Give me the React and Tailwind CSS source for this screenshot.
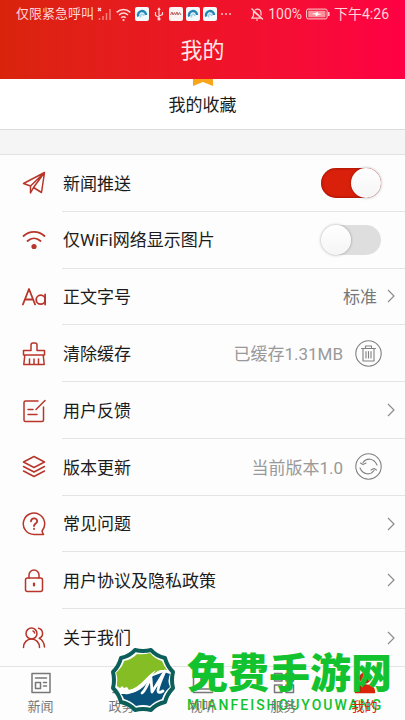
import React from "react";

const sans = "font-['Roboto','Noto_Sans_CJK_SC',sans-serif]";

function Glyph({ children, className = "size-6" }) {
  return (
    <svg
      viewBox="0 0 24 24"
      fill="none"
      stroke="currentColor"
      strokeWidth="1.5"
      strokeLinecap="round"
      strokeLinejoin="round"
      aria-hidden="true"
      className={`shrink-0 ${className}`}
    >
      {children}
    </svg>
  );
}

const icons = {
  plane: (
    <Glyph>
      <path d="M22.500 1.500 1.500 12.500 8.500 15 22.500 1.500 19.500 21.500 11.500 16.500 22.500 1.500M8.500 15v7l3-5.500" />
    </Glyph>
  ),
  wifi: (
    <Glyph>
      <path strokeWidth="1.800" d="M1.500 8c6-5.600 15-5.600 21 0M5.500 13c4-3.600 9-3.600 13 0" />
      <circle cx="12" cy="18.500" r="2.600" fill="currentColor" stroke="none" />
    </Glyph>
  ),
  font: (
    <Glyph>
      <path strokeWidth="1.800" d="M.9 19.500 7 4l6.100 15.500M3.200 14.500h7.600M23.100 9.500v10" />
      <circle cx="18.700" cy="14.700" r="4.500" strokeWidth="1.800" />
    </Glyph>
  ),
  brush: (
    <Glyph>
      <path d="M1.500 8.500h7.500V3a2 2 0 0 1 2-2h2a2 2 0 0 1 2 2v5.500h7.500V13h-21zM2.800 13l-1 9.500h20.400l-1-9.500M7.500 17v5.500M12 17v5.500M16.500 17v5.500" />
    </Glyph>
  ),
  edit: (
    <Glyph>
      <path d="M16 2H3.500A1.500 1.500 0 0 0 2 3.500v17.500a1.500 1.500 0 0 0 1.500 1.500h16.500a1.500 1.500 0 0 0 1.500-1.500V8M23 1.500l-9 9M6 10.500h5M6 15.500h9" />
    </Glyph>
  ),
  layers: (
    <Glyph>
      <path d="M12 1.500 1.500 7 12 12.500 22.500 7zM1.500 11.500 12 17l10.500-5.500M1.500 16 12 21.500 22.500 16" />
    </Glyph>
  ),
  help: (
    <Glyph>
      <path d="M21.500 22.500H12a10.700 10.700 0 1 1 8-3.600c.2 1.300.7 2.400 1.500 3.600z" />
      <path strokeWidth="1.800" d="M9 9.300c.2-4 6.300-3.800 6.200 0 0 2.200-3.200 2.200-3.200 4.700M12 16.700v.3" />
    </Glyph>
  ),
  lock: (
    <Glyph>
      <rect x="3.500" y="9" width="17" height="13.500" rx="2" />
      <path d="M7 9V6a5 5 0 0 1 10 0v3" />
      <path strokeWidth="2.200" d="M12 14.500v2" />
    </Glyph>
  ),
  people: (
    <Glyph>
      <circle cx="9.500" cy="7.500" r="5.500" />
      <path d="M1.500 21.500c0-5 3.500-8.500 8-8.500s8 3.500 8 8.500M11 5c1 .3 1.500 1 1.600 2M16.500 2.300c5 1.200 5.500 8 .8 10 3 1.500 5 4.700 5.200 8.700" />
    </Glyph>
  ),
};

function Chevron() {
  return (
    <svg viewBox="0 0 8 14" fill="none" stroke="#8c8c8c" strokeWidth="1.200" aria-hidden="true" className="h-[14px] w-2 shrink-0">
      <path d="m1 1 6 6-6 6" />
    </svg>
  );
}

function Row({ icon, id, label, detail, muted, children }) {
  const Tag = id ? "label" : "span";
  return (
    <li className="group flex flex-1 pl-[22px]">
      <span className="flex w-10 shrink-0 items-center text-[#b8352a]">{icons[icon]}</span>
      <div className="flex flex-1 items-center border-b border-[#e4e4e4] pl-px group-last:border-b-0">
        <Tag htmlFor={id} className="flex-1 pt-[3px] text-[17px] text-[#1b1b1b]">{label}</Tag>
        {detail && (
          <span className={muted ? "mr-3 pt-[3px] text-[17px] text-[#999]" : "mr-[10px] pt-[3px] text-[17px] text-[#777]"}>{detail}</span>
        )}
        {children}
      </div>
    </li>
  );
}

function LinkEnd({ label }) {
  return (
    <button type="button" aria-label={label} className="flex h-10 items-center pr-[10px]">
      <Chevron />
    </button>
  );
}

function Switch({ id, on }) {
  return (
    <input
      id={id}
      type="checkbox"
      role="switch"
      defaultChecked={on}
      className="mr-6 flex h-[30px] w-[60px] shrink-0 appearance-none rounded-full bg-[#dedede] before:size-[30px] before:rounded-full before:bg-gradient-to-b before:from-white before:to-[#f5f5f5] before:shadow-[0_0_3px_rgba(0,0,0,0.35)] checked:justify-end checked:bg-[#d9200a] checked:shadow-[inset_0_0_3px_rgba(90,0,0,0.7)]"
    />
  );
}

function RoundButton({ label, children }) {
  return (
    <button type="button" aria-label={label} className="mr-[23px] text-[#808080]">
      <svg viewBox="0 0 27 27" fill="none" stroke="currentColor" strokeWidth="1.100" strokeLinecap="round" strokeLinejoin="round" className="size-[27px]">
        <circle cx="13.500" cy="13.500" r="12.700" />
        {children}
      </svg>
    </button>
  );
}

function BrowserBadge() {
  return (
    <svg viewBox="0 0 14 14" className="size-[14px]" aria-hidden="true">
      <rect width="14" height="14" rx="2" fill="#f4f9fc" />
      <path d="M3.300 9.500A4 4 0 1 1 11 8" fill="none" stroke="#2387b5" strokeWidth="2.400" />
      <path d="M5.500 10.500C5 7 8 6 9 9" fill="none" stroke="#9fd4ec" strokeWidth="1.500" />
    </svg>
  );
}

function StatusBar() {
  return (
    <div className="flex h-7 items-center justify-between pr-4 pl-4 text-[13px] text-[#ffd5d5]">
      <div className="flex items-center gap-[3px]">
        <span>仅限紧急呼叫</span>
        <svg viewBox="0 0 15 14" fill="none" className="h-[14px] w-[15px]" aria-hidden="true">
          <path d="m1 1 3 3M4 1 1 4" stroke="#ffe0e0" strokeWidth="1.300" />
          <path d="M2.500 13v-2M6 13V9M9.500 13V6M13 13V2" stroke="#f5807c" strokeWidth="1.500" />
        </svg>
        <svg viewBox="0 0 14 14" fill="none" stroke="currentColor" strokeWidth="1.400" className="mx-px size-[15px]" aria-hidden="true">
          <path d="M.6 5c3.700-3.500 9.100-3.500 12.800 0M2.800 7.500c2.600-2.300 5.800-2.300 8.400 0M4.900 10c1.300-1.200 2.900-1.200 4.200 0" />
          <circle cx="7" cy="12.200" r="1" fill="currentColor" stroke="none" />
        </svg>
        <BrowserBadge />
        <svg viewBox="0 0 14 14" fill="none" stroke="currentColor" strokeWidth="1.200" className="size-[14px]" aria-hidden="true">
          <path d="M7 1.500v11M7 10.500 3.500 8.500V5M7 9l3.500-1.500V5M5.800 2.800 7 1.200l1.200 1.600" />
          <circle cx="7" cy="12" r="1" fill="currentColor" />
        </svg>
        <svg viewBox="0 0 14 14" className="size-[14px]" aria-hidden="true">
          <rect width="14" height="14" rx="2" fill="#fdf3f2" />
          <path d="m1.500 8 1.500-3 1 3 1.500-2.500 1 2.500 1.500-3 1 3 1.500-2.500L12 8" stroke="#b9615f" strokeWidth="1" fill="none" />
        </svg>
        <BrowserBadge />
        <BrowserBadge />
        <svg viewBox="0 0 12 14" fill="currentColor" className="h-[14px] w-3" aria-hidden="true">
          <circle cx="2" cy="7" r=".9" />
          <circle cx="6" cy="7" r=".9" />
          <circle cx="10" cy="7" r=".9" />
        </svg>
      </div>
      <div className="flex items-center gap-1">
        <svg viewBox="0 0 14 14" fill="none" stroke="currentColor" strokeWidth="1.200" className="size-[14px]" aria-hidden="true">
          <path d="M2 11.200h9.500L3.500 4.500v4zM5 3c2.500-2 6-.5 6 2.500v3M1.500 1.500l11.500 11M6 13h2" />
        </svg>
        <span className="text-[14px]">100%</span>
        <svg viewBox="0 0 24 12" fill="none" className="h-3 w-6" aria-hidden="true">
          <rect x=".6" y="1.100" width="20.500" height="9.800" rx="1.500" stroke="#ffd5d5" />
          <rect x="2.200" y="2.700" width="17.300" height="6.600" fill="#f9929b" />
          <path d="M22.800 4v4" stroke="#ffd5d5" strokeWidth="1.500" />
          <path d="m5.500 6 4-1 2-1.500 .5 2 4 .5-4 1-2 1.500-.5-2z" fill="#fff" />
        </svg>
        <span className="text-[14px]">下午4:26</span>
      </div>
    </div>
  );
}

const tabs = [
  { name: "新闻", art: <path d="M3 2.500h18v19H3zM6.500 7h11M6.500 11.500h5v6h-5zM14.500 11.500h3M14.500 15h3" /> },
  { name: "政务", art: <path d="M3 21.500h18M5 21.500V9h14v12.500M2.500 9 12 2.500 21.500 9M9.500 12v6M14.500 12v6" /> },
  { name: "视听", art: <path d="M2.500 3h19v15h-19zM10 7.500v6l5-3zM2.500 21.500h19" /> },
  { name: "服务", art: <path d="M2.500 2.500h7.500V10H2.500zM14 2.500h7.500V10H14zM2.500 14h7.500v7.500H2.500zM14 14h7.500v7.500H14z" /> },
  {
    name: "我的",
    active: true,
    art: (
      <g fill="currentColor">
        <circle cx="12" cy="7" r="5" />
        <path d="M2.500 21.500c0-5 4-7.500 9.500-7.500s9.500 2.500 9.500 7.500z" />
      </g>
    ),
  },
];

function Watermark() {
  return (
    <div className="pointer-events-none absolute bottom-[5px] left-[109px] flex items-center gap-[10px]">
      <svg viewBox="0 0 68 68" className="size-[68px]" aria-hidden="true">
        <path
          d="M42 4Q47 10 56 12Q58 20 64 26Q62 34 64 42Q58 48 56 56Q47 58 42 64Q34 62 26 64Q21 58 12 56Q10 48 4 42Q6 34 4 26Q10 20 12 12Q21 10 26 4Q34 6 42 4Z"
          fill="#fff"
          stroke="#0b5e59"
          strokeWidth="4"
          strokeLinejoin="round"
        />
        <path d="M8 40C8 36 9 32 7 27C12 22 14 19 15 15C21 14 25 11 28 8Q34 9 41 7Q46 13 53 15Q55 20 58 24C54 24 50 23 46 27C36 31 30 43 20 44Q14 45 8 40Z" fill="#84bd24" />
        <path d="M12 48C26 49 34 42 44 30L55 26L61 28Q58 35 61 41Q55 46 53 53Q46 55 41 60Q34 58 27 60Q22 55 15 53Q14 50 12 48Z" fill="#08527c" />
        <path d="M9 42c2 1 3-1 4-2l2 2 3-1 2 3c11-2 16-13 27-20-7 9-11 21-28 24-5 1-8-2-10-6z" fill="#fff" />
        <path d="M33 47c4-3 6-11 9-15l1 14L56 25c-3 7-6 13-7 19 0 3 2 3 5 1" fill="none" stroke="#fff" strokeWidth="2.800" strokeLinecap="round" strokeLinejoin="round" />
      </svg>
      <div className="pt-2 whitespace-nowrap text-[#12c22e]">
        <p className="text-[41px] leading-[42px] font-black">免费手游网</p>
        <p className="text-[14px] leading-5 font-medium tracking-[2px]">MIANFEISHOUYOUWANG</p>
      </div>
    </div>
  );
}

export default function App() {
  return (
    <div className={`relative flex h-screen min-h-[640px] flex-col overflow-hidden bg-[#fdfdfd] ${sans}`}>
      <header className="h-[79px] shrink-0 bg-gradient-to-r from-[#d9240b] via-[#ee1426] to-[#ff0044]">
        <StatusBar />
        <h1 className="text-center text-[22px] leading-[46px] text-[#ffe6e6]">我的</h1>
      </header>

      <a href="#favorites" className="flex h-[51px] shrink-0 flex-col items-center border-b border-[#dcdcdc] bg-white text-[17px] text-[#1b1b1b]">
        <svg viewBox="0 0 20 7" className="h-[7px] w-5" aria-hidden="true">
          <path d="M0 0h20v7l-10-4-10 4z" fill="#f8a51b" />
        </svg>
        <span className="leading-[38px]">我的收藏</span>
      </a>

      <div className="h-[25px] shrink-0 border-b border-[#e2e2e2] bg-[#f5f5f5]" />

      <ul className="flex flex-1 flex-col">
        <Row icon="plane" id="push" label="新闻推送"><Switch id="push" on /></Row>
        <Row icon="wifi" id="wifi" label="仅WiFi网络显示图片"><Switch id="wifi" /></Row>
        <Row icon="font" label="正文字号" detail="标准"><LinkEnd label="正文字号" /></Row>
        <Row icon="brush" label="清除缓存" detail="已缓存1.31MB" muted>
          <RoundButton label="清除缓存">
            <path d="M6.500 8.500h14M10.500 8.500V6h6v2.500M8 8.500V21h11V8.500M11 11.500v6.500M13.500 11.500v6.500M16 11.500v6.500" />
          </RoundButton>
        </Row>
        <Row icon="edit" label="用户反馈"><LinkEnd label="用户反馈" /></Row>
        <Row icon="layers" label="版本更新" detail="当前版本1.0" muted>
          <RoundButton label="版本更新">
            <path d="M8 9.500c3.500-5 11-4.500 14 2.500M19 17.500c-3.500 5-11 4.500-14-2.500M5.500 10l2.500 1.500 3-1.500M21.500 17 19 15.500l-3 1.500" />
          </RoundButton>
        </Row>
        <Row icon="help" label="常见问题"><LinkEnd label="常见问题" /></Row>
        <Row icon="lock" label="用户协议及隐私政策"><LinkEnd label="用户协议及隐私政策" /></Row>
        <Row icon="people" label="关于我们"><LinkEnd label="关于我们" /></Row>
      </ul>

      <nav className="grid h-[54px] shrink-0 grid-cols-5 bg-[#fdfdfd]">
        {tabs.map((tab) => (
          <a
            key={tab.name}
            href={`#${tab.name}`}
            aria-current={tab.active ? "page" : undefined}
            className={`flex flex-col items-center gap-[3px] border-t border-[#e4e4e4] pt-1 text-[13px] leading-[18px] ${tab.active ? "text-[#d9240b]" : "text-[#777]"}`}
          >
            <Glyph className="size-6">{tab.art}</Glyph>
            <span className={tab.name === "政务" ? "" : "relative z-10"}>{tab.name}</span>
          </a>
        ))}
      </nav>

      <Watermark />
    </div>
  );
}
